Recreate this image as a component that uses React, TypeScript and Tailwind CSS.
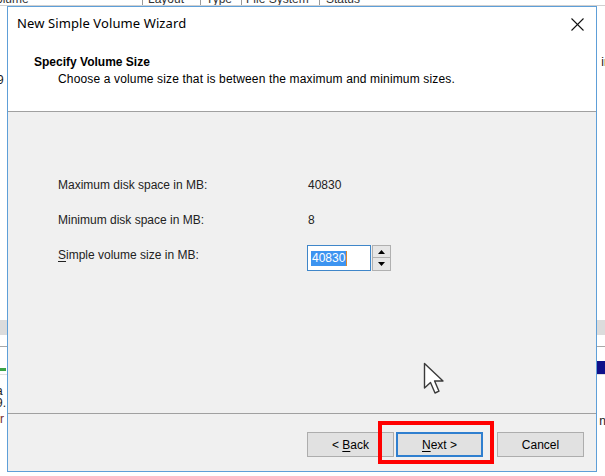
import React from 'react';

const ui = { fontFamily: '"Liberation Sans", Arial, sans-serif' };
const titleFont = { fontFamily: '"Noto Sans", "Open Sans", sans-serif' };

function SpinArrow({ up }: { up?: boolean }) {
  return (
    <svg width="7" height="4" viewBox="0 0 7 4">
      {up ? <polygon points="0,4 7,4 3.5,0" fill="#000" /> : <polygon points="0,0 7,0 3.5,4" fill="#000" />}
    </svg>
  );
}

function WizardButton({ label, hotkey, rest, primary }: { label?: string; hotkey: string; rest: string; primary?: boolean }) {
  return (
    <button
      className={
        primary
          ? 'w-[87px] h-[25px] bg-[#e1e1e1] border-2 border-[#2f7fcf] text-[12px] text-black flex items-center justify-center'
          : 'w-[87px] h-[25px] bg-[#e1e1e1] border border-[#adadad] text-[12px] text-black flex items-center justify-center'
      }
    >
      <span className="whitespace-pre">
        {label}
        <span className="underline underline-offset-2">{hotkey}</span>
        {rest}
      </span>
    </button>
  );
}

export default function App() {
  return (
    <div className="relative w-[605px] h-[476px] bg-white overflow-hidden text-[#1a1a1a]" style={ui}>
      {/* Disk Management list behind the dialog */}
      <div className="h-[6px] overflow-hidden border-b border-[#d0d0d0]">
        <div className="flex -mt-[8px] text-[12px] text-[#333] leading-[14px]">
          <span className="w-[146px] -ml-[4px]">olume</span>
          <span className="w-[58px] border-l border-[#999] pl-[5px]">Layout</span>
          <span className="w-[41px] border-l border-[#999] pl-[5px]">Type</span>
          <span className="w-[78px] border-l border-[#999] pl-[4px]">File System</span>
          <span className="border-l border-[#999] pl-[6px]">Status</span>
        </div>
      </div>
      <div className="h-[314px] flex justify-between text-[12px] leading-[14px]">
        <div className="pt-[67px] -ml-[3px]">9</div>
        <div className="pt-[49px] -mr-[3px]">ir</div>
      </div>
      <div className="h-[15px] bg-[#dcdcdc]" />
      <div className="h-[12px] border-b border-[#a8a8a8]" />
      <div className="h-[14px]" />
      <div className="h-[13px] flex justify-between">
        <div className="w-[6px] mt-[7px] h-[3px] bg-[#3aa345]" />
        <div className="w-[10px] bg-[#10108a]" />
      </div>
      <div className="flex justify-between text-[12px] leading-[12px] border-t border-[#e0e0e0]">
        <div className="pt-[10px] -ml-[4px] flex flex-col">
          <span>a</span>
          <span>9.</span>
          <span className="mt-[4px] ml-[4px] text-[#7a2a2a]">r</span>
        </div>
        <div className="pt-[40px] -mr-[1px]">n</div>
      </div>

      {/* Wizard dialog */}
      <div className="absolute left-[7px] top-[6px] w-[590px] h-[466px] border border-[#5e9fd8] bg-[#f0f0f0] flex flex-col">
        <div className="h-[34px] bg-white flex items-center justify-between pl-[9px] pr-[12px]">
          <span className="text-[13px] text-black tracking-[0.1px]" style={titleFont}>New Simple Volume Wizard</span>
          <svg width="13" height="13" viewBox="0 0 13 13">
            <line x1="0.5" y1="0.5" x2="12.5" y2="12.5" stroke="#111" strokeWidth="1.1" />
            <line x1="12.5" y1="0.5" x2="0.5" y2="12.5" stroke="#111" strokeWidth="1.1" />
          </svg>
        </div>
        <div className="h-[71px] bg-white border-b border-[#a0a0a0] flex flex-col pt-[14px]">
          <div className="pl-[26px] text-[12px] leading-[14px] font-bold text-black">Specify Volume Size</div>
          <div className="pl-[50px] mt-[3px] text-[12px] leading-[14px] text-black tracking-[0.15px]">
            Choose a volume size that is between the maximum and minimum sizes.
          </div>
        </div>

        <div className="flex-1 pl-[50px] pt-[63px] text-[12px] leading-[14px] text-[#222] border-b border-[#a0a0a0]">
          <div className="flex items-center h-[20px]">
            <span className="w-[250px]">Maximum disk space in MB:</span>
            <span>40830</span>
          </div>
          <div className="flex items-center h-[20px] mt-[15px]">
            <span className="w-[250px]">Minimum disk space in MB:</span>
            <span>8</span>
          </div>
          <div className="flex items-start mt-[15px]">
            <span className="w-[249px] mt-[3px]">
              <span className="underline underline-offset-2">S</span>imple volume size in MB:
            </span>
            <div className="w-[64px] h-[26px] bg-white border border-[#3f86c9] flex items-center pl-[3px]">
              <span className="bg-[#3d94f0] text-white px-[1px] leading-[15px]">40830</span>
              <span className="w-[1px] h-[15px] bg-[#e08a2c]" />
            </div>
            <div className="ml-[1px] w-[19px] h-[26px] flex flex-col">
              <div className="h-[13px] bg-[#e6e6e6] border border-[#b0b0b0] flex items-center justify-center">
                <SpinArrow up />
              </div>
              <div className="h-[13px] bg-[#e6e6e6] border border-[#b0b0b0] border-t-0 flex items-center justify-center">
                <SpinArrow />
              </div>
            </div>
          </div>
        </div>

        <div className="h-[57px] flex justify-end items-start pt-[18px] pr-[12px]">
          <WizardButton label="< " hotkey="B" rest="ack" />
          <div className="w-[2px]" />
          <WizardButton hotkey="N" rest="ext >" primary />
          <div className="w-[14px]" />
          <WizardButton hotkey="" label="Cancel" rest="" />
        </div>
      </div>

      {/* red highlight annotation */}
      <div className="absolute left-[378px] top-[421px] w-[116px] h-[43px] border-4 border-[#ff0000]" />

      {/* mouse pointer */}
      <svg className="absolute left-[423px] top-[362px]" width="24" height="34" viewBox="0 0 24 34">
        <path
          d="M1.5 1.5 L1.5 26 L7.5 20.5 L12 31 L16 29.2 L11.6 19 L20 19 Z"
          fill="#fff"
          stroke="#3a3a3a"
          strokeWidth="1.4"
          strokeLinejoin="round"
        />
      </svg>
    </div>
  );
}
